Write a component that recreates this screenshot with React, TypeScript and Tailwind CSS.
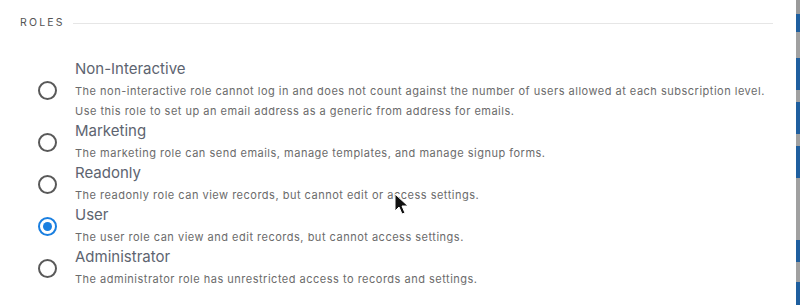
import React from "react";

const roles = [
  {
    title: "Non-Interactive",
    desc: [
      "The non-interactive role cannot log in and does not count against the number of users allowed at each subscription level.",
      "Use this role to set up an email address as a generic from address for emails.",
    ],
    checked: false,
  },
  {
    title: "Marketing",
    desc: ["The marketing role can send emails, manage templates, and manage signup forms."],
    checked: false,
  },
  {
    title: "Readonly",
    desc: ["The readonly role can view records, but cannot edit or access settings."],
    checked: false,
  },
  {
    title: "User",
    desc: ["The user role can view and edit records, but cannot access settings."],
    checked: true,
  },
  {
    title: "Administrator",
    desc: ["The administrator role has unrestricted access to records and settings."],
    checked: false,
  },
];

function Radio({ checked }: { checked: boolean }) {
  if (checked) {
    return (
      <div className="w-[19px] h-[19px] rounded-full border-2 border-[#1a7fe0] flex items-center justify-center">
        <div className="w-[9px] h-[9px] rounded-full bg-[#1a7fe0]" />
      </div>
    );
  }
  return <div className="w-[19px] h-[19px] rounded-full border-2 border-[#595959]" />;
}

const stripe = [
  { c: "bg-[#9a9a9a]", h: 14 },
  { c: "bg-[#1f5f9f]", h: 18 },
  { c: "bg-[#a0a0a0]", h: 26 },
  { c: "bg-[#1f5f9f]", h: 32 },
  { c: "bg-[#a0a0a0]", h: 12 },
  { c: "bg-[#1f5f9f]", h: 32 },
  { c: "bg-[#a0a0a0]", h: 12 },
  { c: "bg-[#1f5f9f]", h: 32 },
  { c: "bg-[#a0a0a0]", h: 62 },
  { c: "bg-[#1f5f9f]", h: 22 },
  { c: "bg-[#a0a0a0]", h: 20 },
  { c: "bg-[#1f5f9f]", h: 23 },
];

export default function App() {
  return (
    <div
      className="relative w-[800px] h-[305px] bg-white flex overflow-hidden"
      style={{ fontFamily: "Inter, 'Noto Sans', sans-serif" }}
    >
      <div className="flex-1 flex flex-col">
        <div className="flex items-center pl-[20px] pr-[23px] pt-[19px] h-[28px]">
          <span className="text-[10.5px] tracking-[2.2px] text-[#555] leading-none">ROLES</span>
          <div className="flex-1 ml-[8px] h-px bg-[#e6e6e6]" />
        </div>
        <div className="flex flex-col pt-[31px]">
          {roles.map((r) => (
            <div key={r.title} className="flex items-center">
              <div className="w-[75px] flex pl-[38px]">
                <Radio checked={r.checked} />
              </div>
              <div className="flex flex-col">
                <div className="text-[15px] leading-[20px] text-[#5d6470]">{r.title}</div>
                <div className="mt-[2px] text-[11px] leading-[20px] text-[#6b6b6b] tracking-[0.5px]">
                  {r.desc.map((d) => (
                    <div key={d}>{d}</div>
                  ))}
                </div>
              </div>
            </div>
          ))}
        </div>
      </div>
      <div className="w-[4px] flex flex-col">
        {stripe.map((s, i) => (
          <div key={i} className={s.c} style={{ height: s.h }} />
        ))}
      </div>
      <svg className="absolute left-[394px] top-[193px]" width="16" height="24" viewBox="0 0 16 24">
        <path d="M1 1 L1 18 L5 14 L8 21 L11 20 L8 13 L14 13 Z" fill="#111" stroke="#fff" strokeWidth="1" />
      </svg>
    </div>
  );
}
